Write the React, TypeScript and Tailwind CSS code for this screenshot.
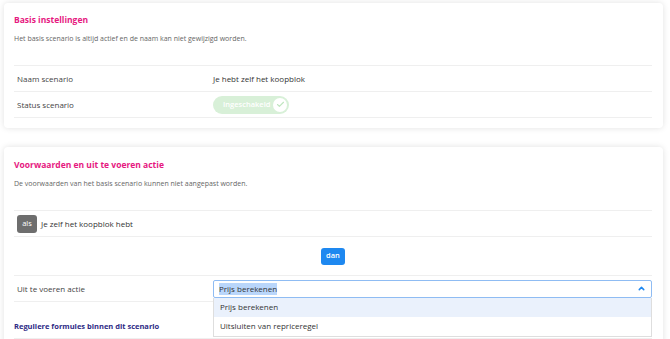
import { Check, ChevronUp } from "lucide-react";

const sans = "font-['Open_Sans',sans-serif]";

export default function App() {
  const cardClass =
    "bg-white rounded-[4px] shadow-[0_0_6px_rgba(0,0,0,0.12)] px-[10px] pr-[11px]";
  const rowClass = "flex items-center h-[26px] border-b border-[#efefef]";
  const labelClass = "w-[199px] pl-[3px] text-[8px] text-[#444]";

  return (
    <div className={`min-h-screen bg-white pl-[4px] pr-[7px] pt-[3px] ${sans}`}>
      {/* ── Basis instellingen ── */}
      <div className={`${cardClass} pt-[11px] pb-[10px]`}>
        <h2 className="text-[8.5px] font-bold text-[#e6197f] leading-[12px]">Basis instellingen</h2>
        <p className="mt-[7px] text-[7px] text-[#666] leading-[12px]">
          Het basis scenario is altijd actief en de naam kan niet gewijzigd worden.
        </p>
        <div className="mt-[20px] border-t border-[#efefef]">
          <div className={rowClass}>
            <span className={labelClass}>Naam scenario</span>
            <span className="text-[8px] text-[#333]">Je hebt zelf het koopblok</span>
          </div>
          <div className={rowClass}>
            <span className={labelClass}>Status scenario</span>
            <div className="flex items-center h-[18px] w-[76px] rounded-full bg-[#d8f0d8] pl-[10px] pr-[2px] justify-between">
              <span className="text-[7.5px] font-semibold text-white">Ingeschakeld</span>
              <span className="flex items-center justify-center w-[14px] h-[14px] rounded-full bg-white">
                <Check className="w-[9px] h-[9px] text-[#bfe5bf]" strokeWidth={3} />
              </span>
            </div>
          </div>
        </div>
      </div>

      {/* ── Voorwaarden en uit te voeren actie ── */}
      <div className={`${cardClass} mt-[19px] pt-[12px] pb-[10px]`}>
        <h2 className="text-[8.5px] font-bold text-[#e6197f] leading-[12px]">
          Voorwaarden en uit te voeren actie
        </h2>
        <p className="mt-[7px] text-[7px] text-[#666] leading-[12px]">
          De voorwaarden van het basis scenario kunnen niet aangepast worden.
        </p>
        <div className="mt-[20px] border-t border-[#efefef]">
          <div className={rowClass}>
            <span className="ml-[3px] flex items-center justify-center w-[20px] h-[18px] rounded-[3px] bg-[#6e6e6e] text-[7.5px] text-white">
              als
            </span>
            <span className="ml-[4px] text-[8px] text-[#333]">Je zelf het koopblok hebt</span>
          </div>
          <div className="flex justify-center items-center h-[39px] border-b border-[#efefef]">
            <button className="h-[17px] px-[5px] rounded-[3px] bg-[#1e88f0] text-[7.5px] font-semibold text-white">
              dan
            </button>
          </div>
          <div className={rowClass}>
            <span className={labelClass}>Uit te voeren actie</span>
            <div className="relative flex-1">
              <div className="flex items-center justify-between h-[18px] border border-[#8fbcf3] rounded-[2px] px-[5px]">
                <span className="text-[8px] text-[#333] bg-[#b9d6fb]">Prijs berekenen</span>
                <ChevronUp className="w-[9px] h-[9px] text-[#1e88f0]" strokeWidth={4} />
              </div>
              <div className="absolute left-0 right-0 top-[18px] z-10 bg-white border border-[#dedede] border-t-0">
                <div className="h-[19px] flex items-center px-[6px] bg-[#eaf1fc] text-[8px] text-[#333]">
                  Prijs berekenen
                </div>
                <div className="h-[19px] flex items-center px-[6px] text-[8px] text-[#333]">
                  Uitsluiten van repriceregel
                </div>
              </div>
            </div>
          </div>
          <div className="pt-[18px] pb-[6px] border-b border-[#efefef]">
            <h3 className="text-[7.5px] font-bold text-[#2e2a85] leading-[12px]">
              Reguliere formules binnen dit scenario
            </h3>
          </div>
          <div className="h-[40px]" />
        </div>
      </div>
    </div>
  );
}
